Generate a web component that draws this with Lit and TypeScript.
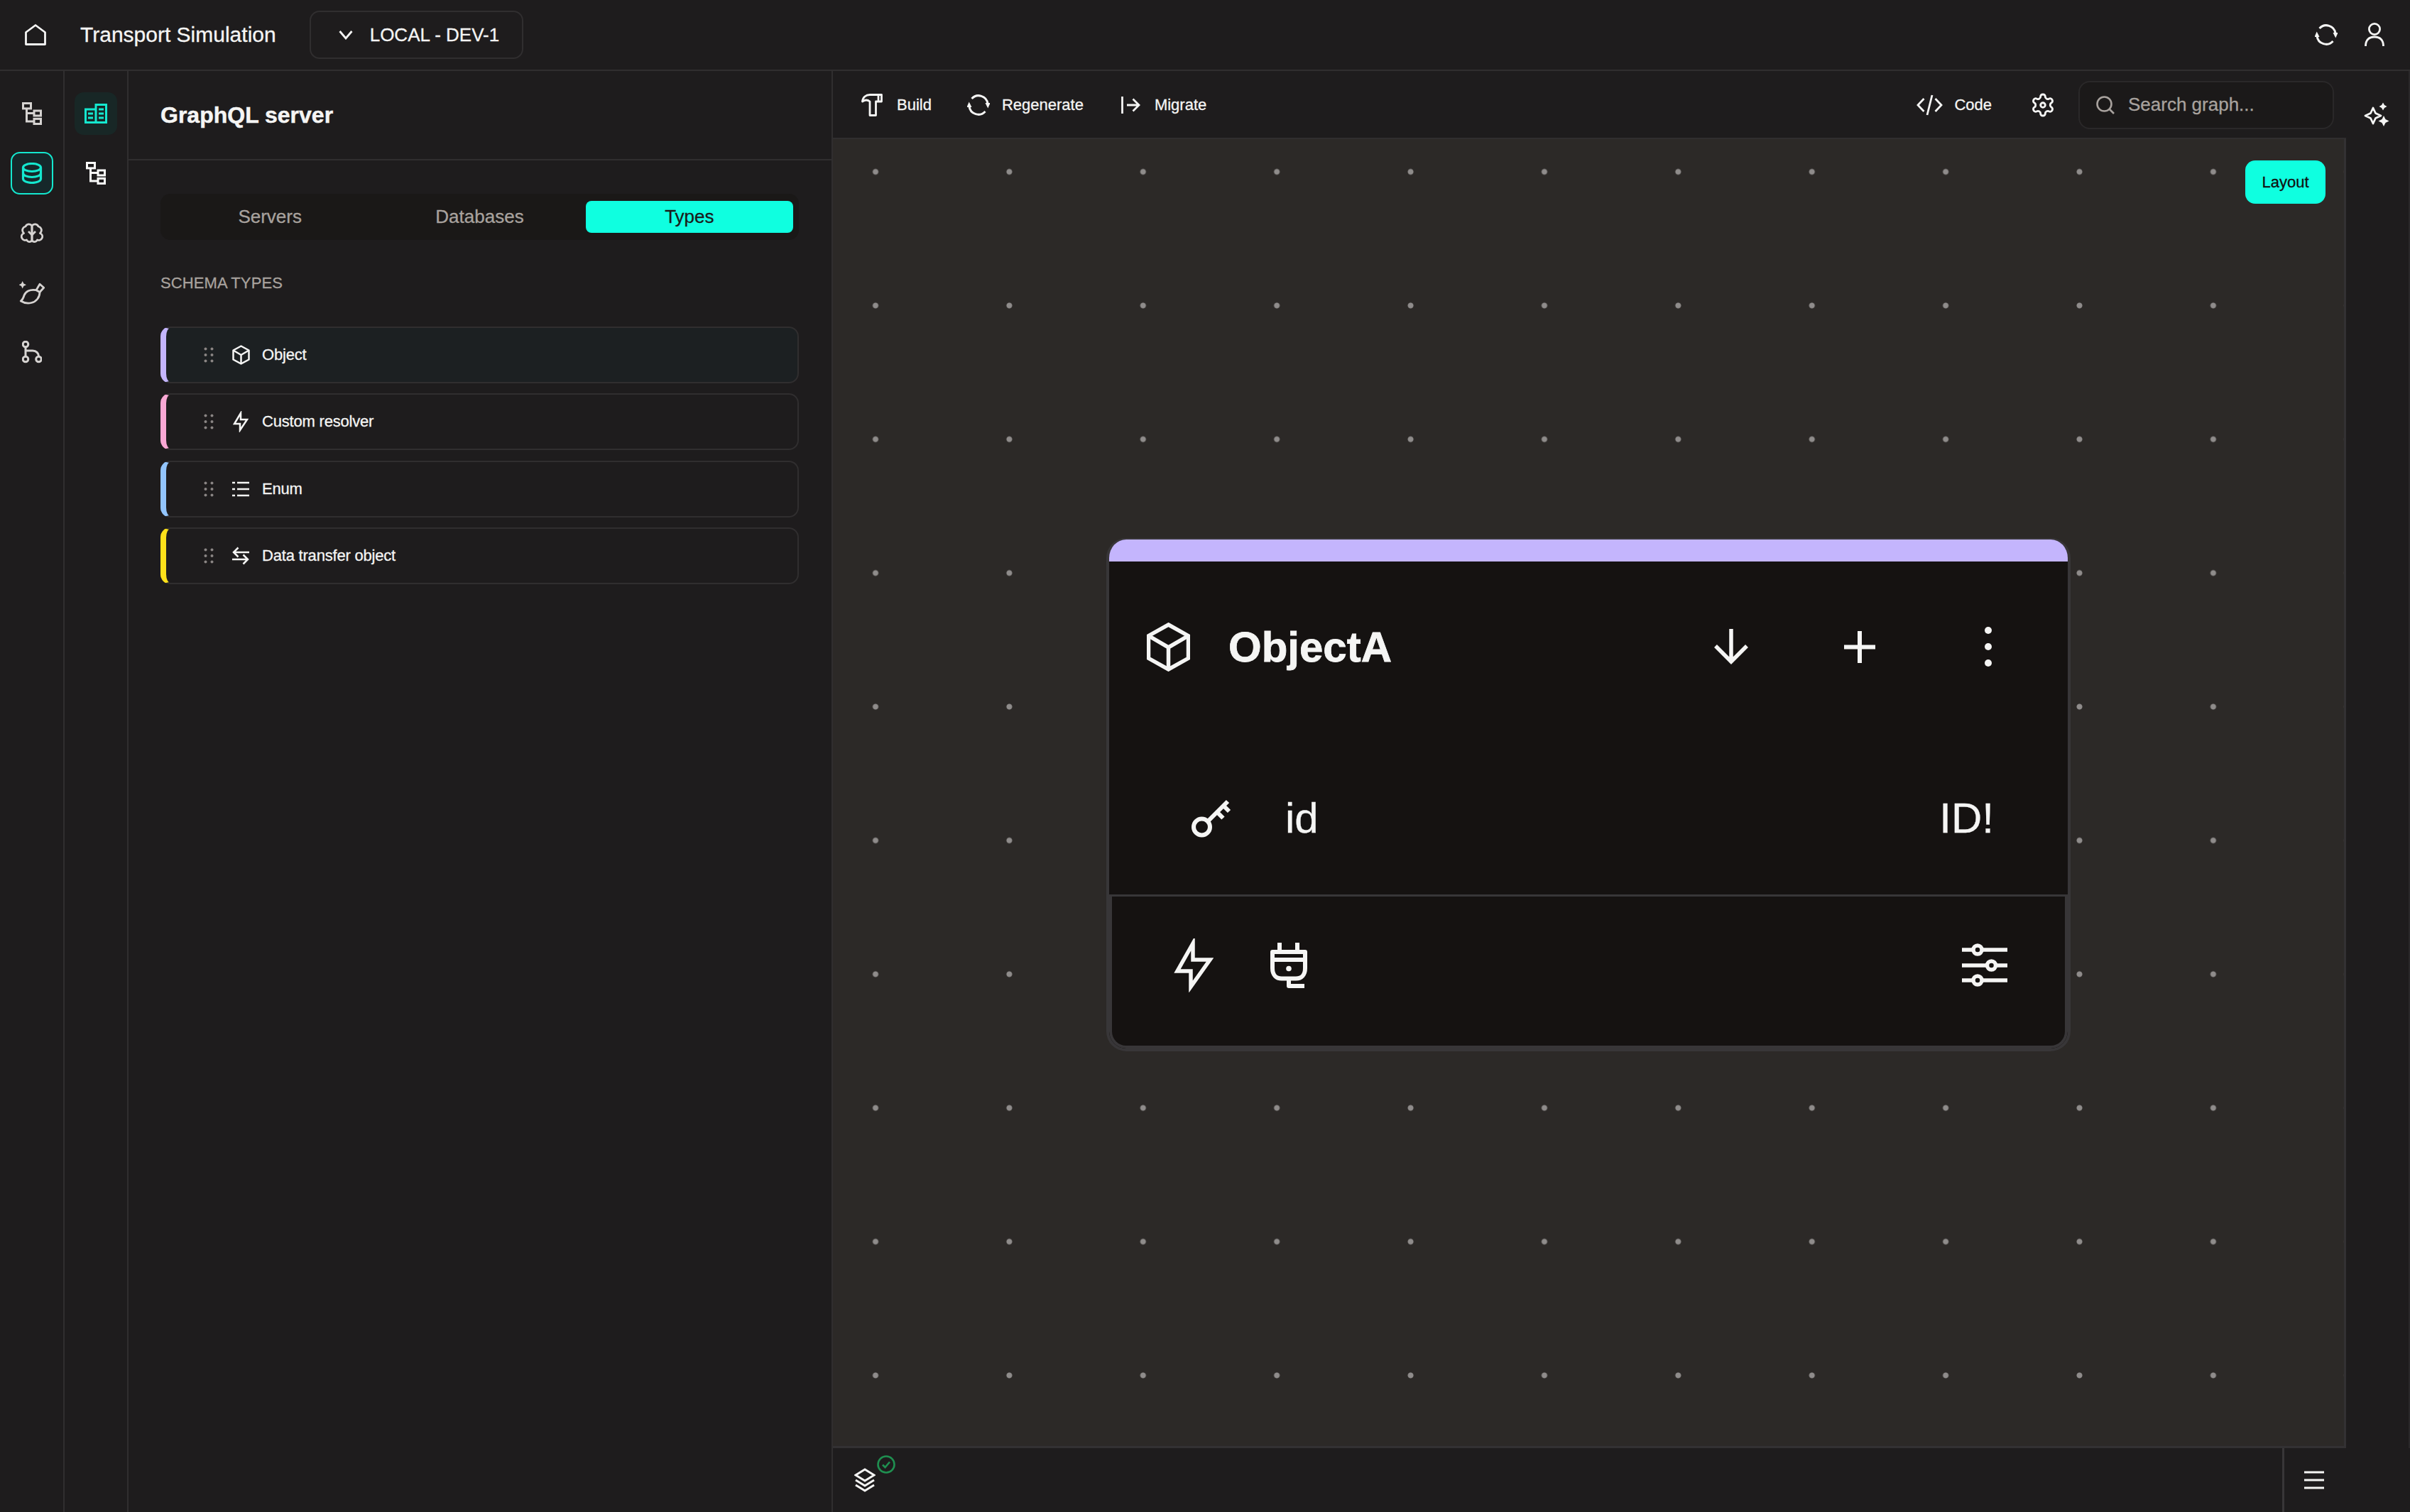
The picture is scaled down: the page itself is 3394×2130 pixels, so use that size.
import { LitElement, css, html } from "lit";
import { customElement } from "lit/decorators.js";

const icons = {
    home: html`<svg width="30" height="30" viewBox="0 0 30 30" fill="none" stroke="currentColor" stroke-width="2.800" stroke-linejoin="round"><path d="M1.500 28.500V11.500L15 1.500L28.500 11.500V28.500Z" /></svg>`,
    chevron: html`<svg width="20" height="14" viewBox="0 0 20 14" fill="none" stroke="currentColor" stroke-width="2.800"><path d="M1.500 2L10 12L18.500 2" /></svg>`,
    refresh: html`<svg width="32" height="32" viewBox="0 0 32 32" fill="none" stroke="currentColor" stroke-width="3"><path d="M6.500 7A13 13 0 0 1 29 14" /><path d="M25.500 25A13 13 0 0 1 3 18" /><path d="M25.500 13H32.500L29.300 20.500Z" fill="currentColor" stroke="none" /><path d="M-0.500 19H6.500L2.700 11.500Z" fill="currentColor" stroke="none" /></svg>`,
    user: html`<svg width="28" height="34" viewBox="0 0 28 34" fill="none" stroke="currentColor" stroke-width="2.800"><circle cx="14" cy="9" r="7.600" /><path d="M1.500 33C1.500 24 6 20 14 20C22 20 26.500 24 26.500 33" /></svg>`,
    tree: html`<svg width="28" height="32" viewBox="0 0 28 32" fill="none" stroke="currentColor" stroke-width="3"><rect x="1.500" y="1.500" width="11" height="7.400" /><rect x="17" y="12" width="9.500" height="7" /><rect x="17" y="23.400" width="9.500" height="7.100" /><path d="M6.500 9V27H17M6.500 15.500H17" /></svg>`,
    db: html`<svg width="30" height="30" viewBox="0 0 30 30" fill="none" stroke="currentColor" stroke-width="3.200"><ellipse cx="15" cy="7" rx="12.500" ry="5.500" /><path d="M2.500 7V23C2.500 26 8 28.500 15 28.500C22 28.500 27.500 26 27.500 23V7" /><path d="M2.500 15C2.500 18 8 20.500 15 20.500C22 20.500 27.500 18 27.500 15" /></svg>`,
    brain: html`<svg width="32" height="32" viewBox="0 0 32 32" fill="none" stroke="currentColor" stroke-width="2.800" stroke-linejoin="round"><path d="M16 6A5 4.500 0 0 0 7 7A5.500 5.500 0 0 0 4.500 16.500A5 5 0 0 0 8.500 26A4.500 4.500 0 0 0 16 27Z" /><path d="M16 6A5 4.500 0 0 1 25 7A5.500 5.500 0 0 1 27.500 16.500A5 5 0 0 1 23.500 26A4.500 4.500 0 0 1 16 27Z" /><path d="M11 14L16 19L21 14" /></svg>`,
    lemon: html`<svg width="36" height="34" viewBox="0 0 36 34" fill="none" stroke="currentColor" stroke-width="2.800" stroke-linejoin="round"><path d="M4.700 1L6.400 4.600L10 6.300L6.400 8L4.700 11.600L3 8L-0.600 6.300L3 4.600Z" fill="currentColor" stroke="none" /><path d="M24 13.700C15 12 9 16 7 21C6 24.500 5 27 2.300 29C7 32 13 32.500 17.300 31.500C24 30 29 24 29 16.500" /><path d="M24 13.700L29 5.300L34.700 10.300L29 16.500Z" /></svg>`,
    git: html`<svg width="28" height="32" viewBox="0 0 28 32" fill="none" stroke="currentColor" stroke-width="3"><circle cx="5" cy="5" r="3.800" /><circle cx="5" cy="26" r="3.800" /><circle cx="23.500" cy="26" r="3.800" /><path d="M5 9V22M5 14H15C20 14 23.500 17.500 23.500 22" /></svg>`,
    buildings: html`<svg width="32" height="28" viewBox="0 0 32 28" fill="none" stroke="currentColor" stroke-width="3"><path d="M1.500 26.500V8H16V26.500ZM16 26.500V1.500H30.500V26.500Z" /><path d="M5 14H12M5 20H12M20 8H27M20 14H27M20 20H27" /></svg>`,
    hammer: html`<svg width="30" height="32" viewBox="0 0 30 32" fill="none" stroke="currentColor" stroke-width="2.800" stroke-linejoin="round"><path d="M1.500 11C2 5 6.500 1.500 12 1.500H28.500V11H20.500V30.500H12V11C8.500 8 5 8.500 1.500 11Z" /><path d="M24 1.500V11" /></svg>`,
    migrate: html`<svg width="27" height="24" viewBox="0 0 27 24" fill="none" stroke="currentColor" stroke-width="2.800"><path d="M1.500 0V24" /><path d="M8 12H25M16.500 3.500L25 12L16.500 20.500" /></svg>`,
    code: html`<svg width="37" height="30" viewBox="0 0 37 30" fill="none" stroke="currentColor" stroke-width="2.800"><path d="M10.500 6L2 15L10.500 24M26.500 6L35 15L26.500 24M22 1L15 29" /></svg>`,
    gear: html`<svg width="36" height="36" viewBox="0 0 24 24" fill="none" stroke="currentColor" stroke-width="1.900"><path d="M12.220 2h-.44a2 2 0 0 0-2 2v.18a2 2 0 0 1-1 1.730l-.43.25a2 2 0 0 1-2 0l-.15-.08a2 2 0 0 0-2.730.73l-.22.38a2 2 0 0 0 .73 2.730l.15.1a2 2 0 0 1 1 1.720v.51a2 2 0 0 1-1 1.740l-.15.09a2 2 0 0 0-.73 2.730l.22.38a2 2 0 0 0 2.730.73l.15-.08a2 2 0 0 1 2 0l.43.25a2 2 0 0 1 1 1.730V20a2 2 0 0 0 2 2h.44a2 2 0 0 0 2-2v-.18a2 2 0 0 1 1-1.730l.43-.25a2 2 0 0 1 2 0l.15.08a2 2 0 0 0 2.730-.73l.22-.39a2 2 0 0 0-.73-2.730l-.15-.08a2 2 0 0 1-1-1.740v-.5a2 2 0 0 1 1-1.740l.15-.09a2 2 0 0 0 .73-2.730l-.22-.38a2 2 0 0 0-2.730-.73l-.15.08a2 2 0 0 1-2 0l-.43-.25a2 2 0 0 1-1-1.730V4a2 2 0 0 0-2-2z" /><circle cx="12" cy="12" r="2.200" /></svg>`,
    search: html`<svg width="26" height="26" viewBox="0 0 26 26" fill="none" stroke="currentColor" stroke-width="2.600"><circle cx="11.500" cy="11.500" r="10" /><path d="M19 19L25 25" /></svg>`,
    sparkles: html`<svg width="36" height="34" viewBox="0 0 36 34" fill="none" stroke="currentColor" stroke-width="2.800" stroke-linejoin="round"><path d="M13 8L16.500 15.500L24 19L16.500 22.500L13 30L9.500 22.500L2 19L9.500 15.500Z" /><path d="M27 0.500L29 4L32.500 6L29 8L27 11.500L25 8L21.500 6L25 4Z" fill="currentColor" stroke="none" /><path d="M28 19L30.500 24L35.500 26.500L30.500 29L28 34L25.500 29L20.500 26.500L25.500 24Z" fill="currentColor" stroke="none" /></svg>`,
    layers: html`<svg width="30" height="34" viewBox="0 0 30 34" fill="none" stroke="currentColor" stroke-width="3"><path d="M15 2L28 10L15 18L2 10Z" /><path d="M2 17L15 25L28 17" /><path d="M2 24L15 32L28 24" /></svg>`,
    check: html`<svg width="26" height="26" viewBox="0 0 26 26" fill="none" stroke="#1f8f50" stroke-width="2.600"><circle cx="13" cy="13" r="11.500" /><path d="M8 13.500L11.500 17L18 9.500" /></svg>`,
    menu: html`<svg width="28" height="26" viewBox="0 0 28 26" fill="none" stroke="currentColor" stroke-width="3"><path d="M0 2H28M0 13H28M0 24H28" /></svg>`,
    grip: html`<svg width="14" height="22" viewBox="0 0 14 22" fill="#8a8584"><circle cx="2.500" cy="2.500" r="2" /><circle cx="11.500" cy="2.500" r="2" /><circle cx="2.500" cy="11" r="2" /><circle cx="11.500" cy="11" r="2" /><circle cx="2.500" cy="19.500" r="2" /><circle cx="11.500" cy="19.500" r="2" /></svg>`,
    cubeSmall: html`<svg width="25" height="28" viewBox="0 0 25 28" fill="none" stroke="currentColor" stroke-width="2.500" stroke-linejoin="round"><path d="M12.500 1.500L23.500 7.500V20.500L12.500 26.500L1.500 20.500V7.500Z" /><path d="M1.500 7.500L12.500 14L23.500 7.500M12.500 14V26.500" /></svg>`,
    boltSmall: html`<svg width="22" height="30" viewBox="0 0 22 30" fill="none" stroke="currentColor" stroke-width="2.500"><path d="M11 3L2 18H10V27L20 12H11Z" /></svg>`,
    list: html`<svg width="24" height="22" viewBox="0 0 24 22" fill="none" stroke="currentColor" stroke-width="2.600"><path d="M7 2H24M7 11H24M7 20H24M0 2H4M0 11H4M0 20H4" /></svg>`,
    transfer: html`<svg width="24" height="26" viewBox="0 0 24 26" fill="none" stroke="currentColor" stroke-width="2.500"><path d="M24 8H2M8.500 1.500L2 8L8.500 14.500" /><path d="M0 18H22M15.500 11.500L22 18L15.500 24.500" /></svg>`,
    cube: html`<svg width="61" height="69" viewBox="0 0 61 69" fill="none" stroke="currentColor" stroke-width="5.500"><path d="M30.500 3L58.500 18.700V50.300L30.500 66L2.500 50.300V18.700Z" /><path d="M2.500 18.700L30.500 35L58.500 18.700M30.500 35V66" /></svg>`,
    arrowDown: html`<svg width="48" height="50" viewBox="0 0 48 50" fill="none" stroke="currentColor" stroke-width="5.500"><path d="M24 0V46M2 24L24 46L46 24" /></svg>`,
    plus: html`<svg width="44" height="45" viewBox="0 0 44 45" fill="none" stroke="currentColor" stroke-width="6"><path d="M22 0V45M0 22.500H44" /></svg>`,
    dots: html`<svg width="12" height="58" viewBox="0 0 12 58" fill="currentColor"><circle cx="6" cy="6" r="5" /><circle cx="6" cy="29" r="5" /><circle cx="6" cy="52" r="5" /></svg>`,
    key: html`<svg width="56" height="54" viewBox="0 0 56 54" fill="none" stroke="currentColor" stroke-width="6"><circle cx="14.500" cy="39" r="11.500" /><path d="M23 31L51 3M36 18L44.500 26.500M45 9L53 17" /></svg>`,
    bolt: html`<svg width="56" height="76" viewBox="0 0 56 76" fill="none" stroke="currentColor" stroke-width="5.500"><path d="M27 7L5 46H24V68L51 30H27Z" /></svg>`,
    plug: html`<svg width="52" height="64" viewBox="0 0 52 64" fill="none" stroke="currentColor" stroke-width="6" stroke-linejoin="round"><path d="M13 0V13M38 0V13" /><path d="M3 13H49V36C49 45 44 50.500 36 50.500H16C8 50.500 3 45 3 36Z" /><path d="M3 24H49" /><path d="M26 50.500V61H48" /><circle cx="26" cy="36.500" r="3.800" fill="currentColor" stroke="none" /></svg>`,
    sliders: html`<svg width="64" height="64" viewBox="0 0 64 64" fill="none" stroke="currentColor" stroke-width="5.500"><path d="M0 10H64M0 32H64M0 53H64" /><circle cx="22" cy="10" r="6" fill="#151211" /><circle cx="41.500" cy="32" r="6" fill="#151211" /><circle cx="22" cy="53" r="6" fill="#151211" /></svg>`,
};

const schemaTypes = [
    { label: "Object", icon: icons.cubeSmall, accent: "purple", active: true },
    { label: "Custom resolver", icon: icons.boltSmall, accent: "pink", active: false },
    { label: "Enum", icon: icons.list, accent: "blue", active: false },
    { label: "Data transfer object", icon: icons.transfer, accent: "yellow", active: false },
];

@customElement("app-root")
export class AppRoot extends LitElement {
    static styles = css`
        :host {
            display: flex;
            flex-direction: column;
            width: 100vw;
            height: 100vh;
            overflow: hidden;
            background: #1e1c1d;
            color: #f5f5f4;
            font-family: "Liberation Sans", Arial, sans-serif;
            -webkit-text-stroke: 0.3px;
        }

        svg {
            display: block;
            flex: none;
        }

        .topbar {
            display: flex;
            align-items: center;
            flex: none;
            height: 100px;
            box-sizing: border-box;
            border-bottom: 2px solid #302e2f;
            padding-left: 35px;
            padding-right: 36px;
        }

        .title {
            margin-left: 48px;
            font-size: 30px;
        }

        .env {
            display: flex;
            align-items: center;
            gap: 24px;
            margin-left: 47px;
            height: 68px;
            width: 301px;
            box-sizing: border-box;
            padding-left: 39px;
            border: 2px solid #302e2f;
            border-radius: 14px;
            font-size: 26px;
        }

        .top-right {
            display: flex;
            align-items: center;
            gap: 38px;
            margin-left: auto;
        }

        .body {
            display: flex;
            flex: 1;
            min-height: 0;
        }

        .rail {
            display: flex;
            flex-direction: column;
            align-items: center;
            gap: 24px;
            flex: none;
            width: 91px;
            box-sizing: border-box;
            padding-top: 30px;
            border-right: 2px solid #302e2f;
        }

        .rail.main {
            color: #d6d3d1;
        }

        .rail.sub {
            width: 90px;
            color: #fafaf9;
        }

        .rail-btn {
            display: flex;
            align-items: center;
            justify-content: center;
            width: 60px;
            height: 60px;
            box-sizing: border-box;
            border-radius: 13px;
        }

        .rail-btn.selected {
            border: 2px solid #14e8cf;
            background: #16282a;
            color: #14e8cf;
        }

        .rail-btn.soft {
            background: #182726;
            color: #14e8cf;
        }

        .panel {
            display: flex;
            flex-direction: column;
            flex: none;
            width: 992px;
            box-sizing: border-box;
            border-right: 2px solid #302e2f;
        }

        .panel-head {
            display: flex;
            align-items: center;
            flex: none;
            height: 126px;
            box-sizing: border-box;
            padding-left: 45px;
            border-bottom: 2px solid #302e2f;
            font-size: 32px;
            font-weight: 700;
            -webkit-text-stroke: 0.5px;
        }

        .panel-body {
            padding: 47px 46px 0 45px;
        }

        .tabs {
            display: grid;
            grid-template-columns: repeat(3, 1fr);
            gap: 3px;
            height: 65px;
            box-sizing: border-box;
            padding: 10px 8px;
            border-radius: 14px;
            background: #1a1817;
        }

        .tab {
            display: flex;
            align-items: center;
            justify-content: center;
            border-radius: 8px;
            font-size: 26px;
            color: #a8a29e;
        }

        .tab.on {
            background: #0fffe0;
            color: #1a1a1a;
        }

        .section {
            margin-top: 48px;
            font-size: 22px;
            line-height: 26px;
            letter-spacing: 0.1px;
            color: #a8a29e;
        }

        .types {
            display: flex;
            flex-direction: column;
            gap: 14.400px;
            margin-top: 48px;
        }

        .type {
            display: flex;
            align-items: center;
            height: 80px;
            box-sizing: border-box;
            padding-left: 53px;
            border: 2px solid #302e2f;
            border-left: 8px solid;
            border-radius: 14px;
            font-size: 22px;
            letter-spacing: -0.2px;
        }

        .type.active {
            background: #1c2022;
        }

        .type.purple {
            border-left-color: #c4b5fd;
        }

        .type.pink {
            border-left-color: #f9a8d4;
        }

        .type.blue {
            border-left-color: #93c5fd;
        }

        .type.yellow {
            border-left-color: #fde01a;
        }

        .type-icon {
            display: flex;
            justify-content: center;
            width: 30px;
            margin-left: 23px;
            margin-right: 15px;
        }

        .workspace {
            display: flex;
            flex-direction: column;
            flex: 1;
            min-width: 0;
        }

        .work-top {
            display: flex;
            flex: 1;
            min-height: 0;
        }

        .work-main {
            display: flex;
            flex-direction: column;
            flex: 1;
            min-width: 0;
        }

        .side {
            display: flex;
            justify-content: center;
            flex: none;
            width: 90px;
            box-sizing: border-box;
            padding-top: 44px;
            padding-right: 2px;
            border-right: 2px solid #2a282a;
        }

        .toolbar {
            display: flex;
            align-items: center;
            flex: none;
            height: 96px;
            box-sizing: border-box;
            padding: 1px 17px 0 40px;
            border-bottom: 2px solid #302e2f;
            font-size: 22px;
        }

        .tool {
            display: flex;
            align-items: center;
            gap: 20px;
            margin-right: 50px;
        }

        .tool.tight {
            gap: 17px;
            margin-right: 53px;
        }

        .tools-right {
            display: flex;
            align-items: center;
            gap: 32px;
            margin-left: auto;
        }

        .tools-right .tool {
            gap: 16px;
            margin-right: 22px;
        }

        .search {
            display: flex;
            align-items: center;
            gap: 19px;
            width: 360px;
            height: 68px;
            box-sizing: border-box;
            padding-left: 23px;
            border: 2px solid #2a2829;
            border-radius: 16px;
            background: #1b1919;
            font-size: 26px;
            color: #a8a29e;
        }

        .canvas {
            position: relative;
            flex: 1;
            min-height: 0;
            box-sizing: border-box;
            border-right: 3px solid #333133;
            border-bottom: 3px solid #333133;
            background-color: #2c2927;
            background-image: radial-gradient(circle, #8f8c8b 0, #8f8c8b 3.500px, transparent 4.500px);
            background-size: 188.400px 188.400px;
            background-position: -34.200px -48.200px;
        }

        .layout-btn {
            position: absolute;
            top: 30px;
            right: 26px;
            display: flex;
            align-items: center;
            justify-content: center;
            width: 113px;
            height: 61px;
            border-radius: 14px;
            background: #0fffe0;
            color: #111;
            font-size: 22px;
        }

        .node {
            position: absolute;
            left: 385px;
            top: 562px;
            width: 1358px;
            height: 723px;
            box-sizing: border-box;
            display: flex;
            flex-direction: column;
            border: 4px solid #383638;
            border-top-width: 2px;
            border-radius: 28px;
            background: #151211;
            overflow: hidden;
        }

        .node-bar {
            flex: none;
            height: 31px;
            background: #c4b5fd;
        }

        .node-head {
            display: flex;
            align-items: center;
            flex: none;
            height: 240px;
            box-sizing: border-box;
            padding-left: 53px;
            padding-right: 22px;
        }

        .node-name {
            margin-left: 54px;
            font-size: 60px;
            font-weight: 700;
            -webkit-text-stroke: 0.8px;
        }

        .node-actions {
            display: flex;
            margin-left: auto;
        }

        .node-action {
            display: flex;
            align-items: center;
            justify-content: center;
            width: 181px;
        }

        .field {
            display: flex;
            align-items: center;
            flex: none;
            height: 229px;
            box-sizing: border-box;
            padding: 14px 104px 0 116px;
            font-size: 60px;
        }

        .field-name {
            margin-left: 76px;
        }

        .field-type {
            margin-left: auto;
        }

        .node-foot {
            display: flex;
            align-items: center;
            flex: 1;
            box-sizing: border-box;
            padding: 0 81px 16px 87px;
            border-top: 3px solid #383638;
            border-left: 4px solid #383638;
            border-right: 4px solid #383638;
            border-bottom: 4px solid #383638;
            border-radius: 0 0 24px 24px;
        }

        .foot-plug {
            margin-left: 80px;
        }

        .foot-sliders {
            margin-left: auto;
        }

        .bottombar {
            display: flex;
            align-items: stretch;
            flex: none;
            height: 90px;
            box-sizing: border-box;
        }

        .status {
            position: relative;
            display: flex;
            flex: 1;
            padding: 28px 0 0 30px;
        }

        .status-ok {
            position: absolute;
            left: 62px;
            top: 10px;
        }

        .menu-cell {
            display: flex;
            align-items: center;
            justify-content: center;
            flex: none;
            width: 90px;
            box-sizing: border-box;
            padding-right: 3px;
            border-left: 3px solid #383638;
            margin-right: 90px;
        }
    `;

    renderType(type: (typeof schemaTypes)[number]) {
        return html`
            <div class="type ${type.accent} ${type.active ? "active" : ""}">
                ${icons.grip}
                <span class="type-icon">${type.icon}</span>
                <span>${type.label}</span>
            </div>
        `;
    }

    render() {
        return html`
            <header class="topbar">
                ${icons.home}
                <span class="title">Transport Simulation</span>
                <div class="env">${icons.chevron}<span>LOCAL - DEV-1</span></div>
                <div class="top-right">${icons.refresh}${icons.user}</div>
            </header>
            <div class="body">
                <nav class="rail main">
                    <div class="rail-btn">${icons.tree}</div>
                    <div class="rail-btn selected">${icons.db}</div>
                    <div class="rail-btn">${icons.brain}</div>
                    <div class="rail-btn">${icons.lemon}</div>
                    <div class="rail-btn">${icons.git}</div>
                </nav>
                <nav class="rail sub">
                    <div class="rail-btn soft">${icons.buildings}</div>
                    <div class="rail-btn">${icons.tree}</div>
                </nav>
                <aside class="panel">
                    <div class="panel-head">GraphQL server</div>
                    <div class="panel-body">
                        <div class="tabs">
                            <div class="tab">Servers</div>
                            <div class="tab">Databases</div>
                            <div class="tab on">Types</div>
                        </div>
                        <div class="section">SCHEMA TYPES</div>
                        <div class="types">${schemaTypes.map((t) => this.renderType(t))}</div>
                    </div>
                </aside>
                <section class="workspace">
                    <div class="work-top">
                        <div class="work-main">
                            <div class="toolbar">
                                <div class="tool">${icons.hammer}<span>Build</span></div>
                                <div class="tool tight">${icons.refresh}<span>Regenerate</span></div>
                                <div class="tool">${icons.migrate}<span>Migrate</span></div>
                                <div class="tools-right">
                                    <div class="tool">${icons.code}<span>Code</span></div>
                                    ${icons.gear}
                                    <div class="search">${icons.search}<span>Search graph...</span></div>
                                </div>
                            </div>
                            <div class="canvas">
                                <div class="layout-btn">Layout</div>
                                <div class="node">
                                    <div class="node-bar"></div>
                                    <div class="node-head">
                                        ${icons.cube}
                                        <span class="node-name">ObjectA</span>
                                        <div class="node-actions">
                                            <div class="node-action">${icons.arrowDown}</div>
                                            <div class="node-action">${icons.plus}</div>
                                            <div class="node-action">${icons.dots}</div>
                                        </div>
                                    </div>
                                    <div class="field">
                                        ${icons.key}
                                        <span class="field-name">id</span>
                                        <span class="field-type">ID!</span>
                                    </div>
                                    <div class="node-foot">
                                        ${icons.bolt}
                                        <span class="foot-plug">${icons.plug}</span>
                                        <span class="foot-sliders">${icons.sliders}</span>
                                    </div>
                                </div>
                            </div>
                        </div>
                        <div class="side">${icons.sparkles}</div>
                    </div>
                    <footer class="bottombar">
                        <div class="status">
                            ${icons.layers}
                            <span class="status-ok">${icons.check}</span>
                        </div>
                        <div class="menu-cell">${icons.menu}</div>
                    </footer>
                </section>
            </div>
        `;
    }
}
